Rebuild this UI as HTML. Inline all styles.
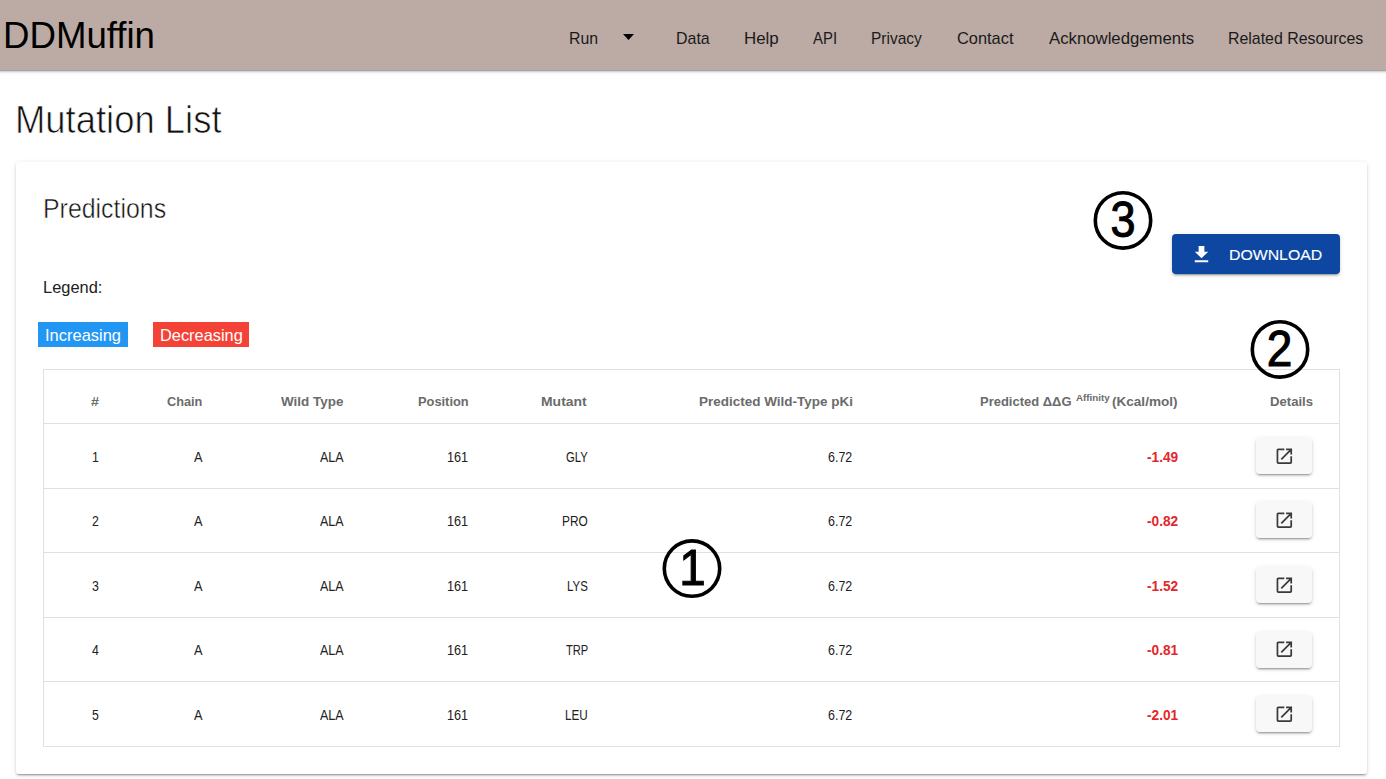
<!DOCTYPE html>
<html><head><meta charset="utf-8">
<style>
html,body{margin:0;padding:0;background:#fff;width:1386px;height:779px;overflow:hidden;position:relative;font-family:"Liberation Sans",sans-serif;}
.t{position:absolute;z-index:3;white-space:nowrap;transform-origin:0 0;font-family:"Liberation Sans",sans-serif;}
.nav{position:absolute;left:-6px;top:0;width:1398px;height:70px;background:#bcaaa4;box-shadow:0 3px 1px -2px rgba(0,0,0,.2),0 2px 2px 0 rgba(0,0,0,.14),0 1px 5px 0 rgba(0,0,0,.12);z-index:2}
.card{position:absolute;left:16px;top:162px;width:1351px;height:612px;background:#fff;border-radius:3px;box-shadow:0 3px 1px -2px rgba(0,0,0,.2),0 2px 2px 0 rgba(0,0,0,.14),0 1px 5px 0 rgba(0,0,0,.12)}
.tbl{position:absolute;left:43px;top:369px;width:1297px;height:378px;box-sizing:border-box;border:1px solid #e0e0e0}
.hl{position:absolute;left:44px;width:1295px;height:1px;background:#e0e0e0}
.chip{position:absolute;top:322px;height:25px}
.btn{position:absolute;left:1172px;top:234px;width:168px;height:40px;background:#0d47a1;border-radius:4px;box-shadow:0 3px 1px -2px rgba(0,0,0,.2),0 2px 2px 0 rgba(0,0,0,.14),0 1px 5px 0 rgba(0,0,0,.12)}
.db{position:absolute;left:1256px;width:56px;height:36px;background:#f8f8f8;border-radius:4px;box-shadow:0 3px 1px -2px rgba(0,0,0,.2),0 2px 2px 0 rgba(0,0,0,.14),0 1px 5px 0 rgba(0,0,0,.12)}
.ic{position:absolute}
</style></head><body>
<div class="nav">
<svg class="ic" style="left:6px;top:0" width="700" height="70"><path d="M623,34H634L628.5,40Z" fill="#000"/></svg>
</div>
<div class="card"></div>
<div class="tbl"></div>
<div class="hl" style="top:423px"></div>
<div class="hl" style="top:488px"></div>
<div class="hl" style="top:552px"></div>
<div class="hl" style="top:617px"></div>
<div class="hl" style="top:681px"></div>
<div class="chip" style="left:38px;width:90px;background:#2196f3"></div>
<div class="chip" style="left:153px;width:96px;background:#f44336"></div>
<div class="btn"></div>
<svg class="ic" style="left:1190.2px;top:242.7px" width="23" height="23" viewBox="0 0 24 24"><path d="M5,20H19V18H5M19,9H15V3H9V9H5L12,16L19,9Z" fill="#fff"/></svg>
<div class="db" style="top:438px"></div>
<div class="db" style="top:502.4px"></div>
<div class="db" style="top:567px"></div>
<div class="db" style="top:631.5px"></div>
<div class="db" style="top:696px"></div>
<svg class="ic" style="left:1273.8px;top:445.5px" width="20.67" height="20.67" viewBox="0 0 24 24"><path d="M14,3V5H17.59L7.76,14.83L9.17,16.24L19,6.41V10H21V3M19,19H5V5H12V3H5C3.89,3 3,3.9 3,5V19A2,2 0 0,0 5,21H19A2,2 0 0,0 21,19V12H19V19Z" fill="#3a3a3a"/></svg>
<svg class="ic" style="left:1273.8px;top:509.9px" width="20.67" height="20.67" viewBox="0 0 24 24"><path d="M14,3V5H17.59L7.76,14.83L9.17,16.24L19,6.41V10H21V3M19,19H5V5H12V3H5C3.89,3 3,3.9 3,5V19A2,2 0 0,0 5,21H19A2,2 0 0,0 21,19V12H19V19Z" fill="#3a3a3a"/></svg>
<svg class="ic" style="left:1273.8px;top:574.5px" width="20.67" height="20.67" viewBox="0 0 24 24"><path d="M14,3V5H17.59L7.76,14.83L9.17,16.24L19,6.41V10H21V3M19,19H5V5H12V3H5C3.89,3 3,3.9 3,5V19A2,2 0 0,0 5,21H19A2,2 0 0,0 21,19V12H19V19Z" fill="#3a3a3a"/></svg>
<svg class="ic" style="left:1273.8px;top:639px" width="20.67" height="20.67" viewBox="0 0 24 24"><path d="M14,3V5H17.59L7.76,14.83L9.17,16.24L19,6.41V10H21V3M19,19H5V5H12V3H5C3.89,3 3,3.9 3,5V19A2,2 0 0,0 5,21H19A2,2 0 0,0 21,19V12H19V19Z" fill="#3a3a3a"/></svg>
<svg class="ic" style="left:1273.8px;top:703.5px" width="20.67" height="20.67" viewBox="0 0 24 24"><path d="M14,3V5H17.59L7.76,14.83L9.17,16.24L19,6.41V10H21V3M19,19H5V5H12V3H5C3.89,3 3,3.9 3,5V19A2,2 0 0,0 5,21H19A2,2 0 0,0 21,19V12H19V19Z" fill="#3a3a3a"/></svg>
<span class="t" style="left:3.47px;top:18.32px;font-size:36px;line-height:36px;font-weight:400;color:#000;transform:scaleX(1.0175);">DDMuffin</span>
<span class="t" style="left:568.87px;top:29.51px;font-size:17px;line-height:17px;font-weight:400;color:#1a1a1a;transform:scaleX(0.9317);">Run</span>
<span class="t" style="left:675.66px;top:29.51px;font-size:17px;line-height:17px;font-weight:400;color:#1a1a1a;transform:scaleX(0.9392);">Data</span>
<span class="t" style="left:743.71px;top:29.51px;font-size:17px;line-height:17px;font-weight:400;color:#1a1a1a;transform:scaleX(0.9938);">Help</span>
<span class="t" style="left:813.30px;top:29.51px;font-size:17px;line-height:17px;font-weight:400;color:#1a1a1a;transform:scaleX(0.8771);">API</span>
<span class="t" style="left:871.29px;top:29.51px;font-size:17px;line-height:17px;font-weight:400;color:#1a1a1a;transform:scaleX(0.9125);">Privacy</span>
<span class="t" style="left:957.30px;top:29.51px;font-size:17px;line-height:17px;font-weight:400;color:#1a1a1a;transform:scaleX(0.9632);">Contact</span>
<span class="t" style="left:1049.10px;top:29.51px;font-size:17px;line-height:17px;font-weight:400;color:#1a1a1a;transform:scaleX(0.9849);">Acknowledgements</span>
<span class="t" style="left:1228.26px;top:29.51px;font-size:17px;line-height:17px;font-weight:400;color:#1a1a1a;transform:scaleX(0.9352);">Related Resources</span>
<span class="t" style="left:15.35px;top:101.11px;font-size:38.37px;line-height:38.37px;font-weight:400;color:#111;transform:scaleX(0.9496);-webkit-text-stroke:0.7px #fff;">Mutation List</span>
<span class="t" style="left:42.79px;top:195.24px;font-size:27.47px;line-height:27.47px;font-weight:400;color:#111;transform:scaleX(0.9058);-webkit-text-stroke:0.5px #fff;">Predictions</span>
<span class="t" style="left:42.93px;top:278.51px;font-size:17px;line-height:17px;font-weight:400;color:#212121;transform:scaleX(0.9661);">Legend:</span>
<span class="t" style="left:44.83px;top:326.81px;font-size:17px;line-height:17px;font-weight:400;color:#fff;transform:scaleX(0.9691);">Increasing</span>
<span class="t" style="left:159.64px;top:326.81px;font-size:17px;line-height:17px;font-weight:400;color:#fff;transform:scaleX(0.9629);">Decreasing</span>
<span class="t" style="left:1229.11px;top:247.72px;font-size:14.5px;line-height:14.5px;font-weight:400;color:#fff;transform:scaleX(1.0915);-webkit-text-stroke:0.1px #fff;">DOWNLOAD</span>
<span class="t" style="left:90.80px;top:395.37px;font-size:13.5px;line-height:13.5px;font-weight:700;color:#6b6b6b;transform:scaleX(1.0625);">#</span>
<span class="t" style="left:167.10px;top:395.37px;font-size:13.5px;line-height:13.5px;font-weight:700;color:#6b6b6b;transform:scaleX(0.9422);">Chain</span>
<span class="t" style="left:281.00px;top:395.37px;font-size:13.5px;line-height:13.5px;font-weight:700;color:#6b6b6b;transform:scaleX(0.9965);">Wild Type</span>
<span class="t" style="left:418.20px;top:395.37px;font-size:13.5px;line-height:13.5px;font-weight:700;color:#6b6b6b;transform:scaleX(0.9509);">Position</span>
<span class="t" style="left:541.30px;top:395.37px;font-size:13.5px;line-height:13.5px;font-weight:700;color:#6b6b6b;transform:scaleX(1.0326);">Mutant</span>
<span class="t" style="left:699.10px;top:395.37px;font-size:13.5px;line-height:13.5px;font-weight:700;color:#6b6b6b;transform:scaleX(0.9987);">Predicted Wild-Type pKi</span>
<span class="t" style="left:979.80px;top:395.37px;font-size:13.5px;line-height:13.5px;font-weight:700;color:#6b6b6b;transform:scaleX(0.9612);">Predicted ΔΔG</span>
<span class="t" style="left:1112.00px;top:395.37px;font-size:13.5px;line-height:13.5px;font-weight:700;color:#6b6b6b;transform:scaleX(1.0037);">(Kcal/mol)</span>
<span class="t" style="left:1269.90px;top:395.37px;font-size:13.5px;line-height:13.5px;font-weight:700;color:#6b6b6b;transform:scaleX(0.9712);">Details</span>
<span class="t" style="left:1076.00px;top:393.46px;font-size:9.5px;line-height:9.5px;font-weight:700;color:#6b6b6b;transform:scaleX(1.0319);">Affinity</span>
<span class="t" style="left:91.70px;top:449.62px;font-size:14.5px;line-height:14.5px;font-weight:400;color:#212121;transform:scaleX(0.8500);">1</span>
<span class="t" style="left:194.00px;top:449.62px;font-size:14.5px;line-height:14.5px;font-weight:400;color:#212121;transform:scaleX(0.8800);">A</span>
<span class="t" style="left:320.00px;top:449.62px;font-size:14.5px;line-height:14.5px;font-weight:400;color:#212121;transform:scaleX(0.8617);">ALA</span>
<span class="t" style="left:446.93px;top:449.62px;font-size:14.5px;line-height:14.5px;font-weight:400;color:#212121;transform:scaleX(0.8734);">161</span>
<span class="t" style="left:565.50px;top:449.62px;font-size:14.5px;line-height:14.5px;font-weight:400;color:#212121;transform:scaleX(0.7783);">GLY</span>
<span class="t" style="left:828.00px;top:449.62px;font-size:14.5px;line-height:14.5px;font-weight:400;color:#212121;transform:scaleX(0.8595);">6.72</span>
<span class="t" style="left:1146.70px;top:449.62px;font-size:14.5px;line-height:14.5px;font-weight:700;color:#e3262b;transform:scaleX(0.9428);">-1.49</span>
<span class="t" style="left:91.70px;top:514.02px;font-size:14.5px;line-height:14.5px;font-weight:400;color:#212121;transform:scaleX(0.8500);">2</span>
<span class="t" style="left:194.00px;top:514.02px;font-size:14.5px;line-height:14.5px;font-weight:400;color:#212121;transform:scaleX(0.8800);">A</span>
<span class="t" style="left:320.00px;top:514.02px;font-size:14.5px;line-height:14.5px;font-weight:400;color:#212121;transform:scaleX(0.8617);">ALA</span>
<span class="t" style="left:446.93px;top:514.02px;font-size:14.5px;line-height:14.5px;font-weight:400;color:#212121;transform:scaleX(0.8734);">161</span>
<span class="t" style="left:561.98px;top:514.02px;font-size:14.5px;line-height:14.5px;font-weight:400;color:#212121;transform:scaleX(0.8194);">PRO</span>
<span class="t" style="left:828.00px;top:514.02px;font-size:14.5px;line-height:14.5px;font-weight:400;color:#212121;transform:scaleX(0.8595);">6.72</span>
<span class="t" style="left:1146.70px;top:514.02px;font-size:14.5px;line-height:14.5px;font-weight:700;color:#e3262b;transform:scaleX(0.9428);">-0.82</span>
<span class="t" style="left:91.70px;top:578.62px;font-size:14.5px;line-height:14.5px;font-weight:400;color:#212121;transform:scaleX(0.8500);">3</span>
<span class="t" style="left:194.00px;top:578.62px;font-size:14.5px;line-height:14.5px;font-weight:400;color:#212121;transform:scaleX(0.8800);">A</span>
<span class="t" style="left:320.00px;top:578.62px;font-size:14.5px;line-height:14.5px;font-weight:400;color:#212121;transform:scaleX(0.8617);">ALA</span>
<span class="t" style="left:446.93px;top:578.62px;font-size:14.5px;line-height:14.5px;font-weight:400;color:#212121;transform:scaleX(0.8734);">161</span>
<span class="t" style="left:567.21px;top:578.62px;font-size:14.5px;line-height:14.5px;font-weight:400;color:#212121;transform:scaleX(0.7908);">LYS</span>
<span class="t" style="left:828.00px;top:578.62px;font-size:14.5px;line-height:14.5px;font-weight:400;color:#212121;transform:scaleX(0.8595);">6.72</span>
<span class="t" style="left:1146.70px;top:578.62px;font-size:14.5px;line-height:14.5px;font-weight:700;color:#e3262b;transform:scaleX(0.9428);">-1.52</span>
<span class="t" style="left:91.70px;top:643.12px;font-size:14.5px;line-height:14.5px;font-weight:400;color:#212121;transform:scaleX(0.8500);">4</span>
<span class="t" style="left:194.00px;top:643.12px;font-size:14.5px;line-height:14.5px;font-weight:400;color:#212121;transform:scaleX(0.8800);">A</span>
<span class="t" style="left:320.00px;top:643.12px;font-size:14.5px;line-height:14.5px;font-weight:400;color:#212121;transform:scaleX(0.8617);">ALA</span>
<span class="t" style="left:446.93px;top:643.12px;font-size:14.5px;line-height:14.5px;font-weight:400;color:#212121;transform:scaleX(0.8734);">161</span>
<span class="t" style="left:565.70px;top:643.12px;font-size:14.5px;line-height:14.5px;font-weight:400;color:#212121;transform:scaleX(0.7695);">TRP</span>
<span class="t" style="left:828.00px;top:643.12px;font-size:14.5px;line-height:14.5px;font-weight:400;color:#212121;transform:scaleX(0.8595);">6.72</span>
<span class="t" style="left:1146.70px;top:643.12px;font-size:14.5px;line-height:14.5px;font-weight:700;color:#e3262b;transform:scaleX(0.9428);">-0.81</span>
<span class="t" style="left:91.70px;top:707.62px;font-size:14.5px;line-height:14.5px;font-weight:400;color:#212121;transform:scaleX(0.8500);">5</span>
<span class="t" style="left:194.00px;top:707.62px;font-size:14.5px;line-height:14.5px;font-weight:400;color:#212121;transform:scaleX(0.8800);">A</span>
<span class="t" style="left:320.00px;top:707.62px;font-size:14.5px;line-height:14.5px;font-weight:400;color:#212121;transform:scaleX(0.8617);">ALA</span>
<span class="t" style="left:446.93px;top:707.62px;font-size:14.5px;line-height:14.5px;font-weight:400;color:#212121;transform:scaleX(0.8734);">161</span>
<span class="t" style="left:565.20px;top:707.62px;font-size:14.5px;line-height:14.5px;font-weight:400;color:#212121;transform:scaleX(0.8042);">LEU</span>
<span class="t" style="left:828.00px;top:707.62px;font-size:14.5px;line-height:14.5px;font-weight:400;color:#212121;transform:scaleX(0.8595);">6.72</span>
<span class="t" style="left:1146.70px;top:707.62px;font-size:14.5px;line-height:14.5px;font-weight:700;color:#e3262b;transform:scaleX(0.9428);">-2.01</span>
<svg class="ic" style="left:0;top:0;z-index:5" width="1386" height="779">
<g fill="none" stroke="#000" stroke-width="3.6">
<circle cx="1123" cy="220.4" r="27.7"/>
<circle cx="1280" cy="349.4" r="27.7"/>
<circle cx="692" cy="568.6" r="27.7"/>
</g>
<g font-family="Liberation Sans" font-size="50" fill="#000" stroke="#000" stroke-width="1.1" text-anchor="middle">
<text x="0" y="237.3" transform="translate(1123,0) scale(0.9,1)">3</text>
<text x="0" y="365.8" transform="translate(1279.5,0) scale(0.92,1)">2</text>
<text x="0" y="585" transform="translate(692.5,0) scale(0.95,1)">1</text>
</g>
</svg>
</body></html>
